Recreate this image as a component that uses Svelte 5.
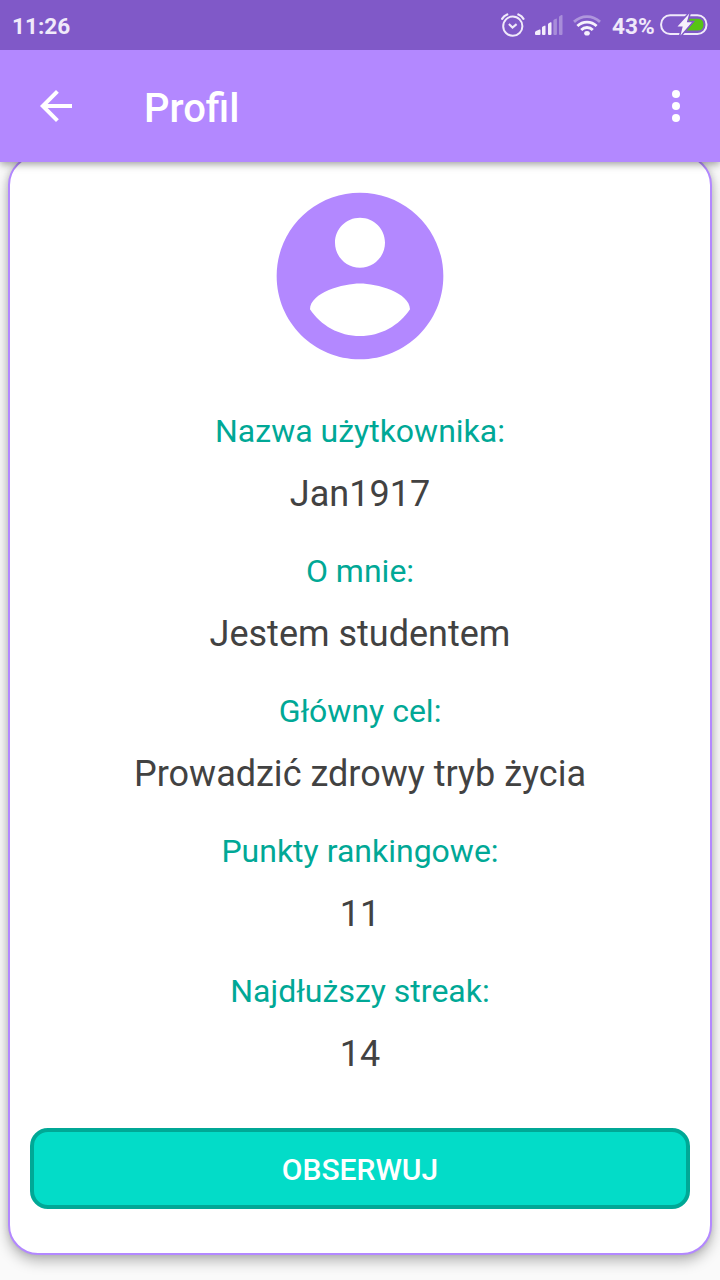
<script>
  const details = [
    { label: 'Nazwa użytkownika:', value: 'Jan1917' },
    { label: 'O mnie:', value: 'Jestem studentem' },
    { label: 'Główny cel:', value: 'Prowadzić zdrowy tryb życia' },
    { label: 'Punkty rankingowe:', value: '11' },
    { label: 'Najdłuższy streak:', value: '14' }
  ];
</script>

<div class="screen">
  <div class="status">
    <span class="time">11:26</span>
    <svg class="alarm" width="26" height="26" viewBox="0 0 26 26" fill="none" stroke="#f0eafa" stroke-width="2">
      <circle cx="12.8" cy="14.2" r="9.6" />
      <path d="M8.9 12.1l3.6 3.4 4.1-3.4" stroke-width="2.1" />
      <path d="M2.2 6.8Q3.7 3.8 7.2 2.5M18.4 2.5Q22 3.8 23.4 6.8" stroke-width="2.3" stroke-linecap="round" />
    </svg>
    <svg class="signal" width="28" height="22" viewBox="0 -.6 28 22" fill="#f3eefb">
      <path d="M0 20V17.9q0-1 1-1.5L4.5 15q1-.3 1 .6V19.4q0 .9-1 .9H1q-1 0-1-.9z" />
      <path d="M7 13.2q0-.8.8-1.2l1.7-.9q1-.4 1 .5V19.4q0 .9-1 .9H8q-1 0-1-.9z" />
      <path d="M13 9.8q0-.8.8-1.2l1.7-.9q1-.4 1 .5v11.2q0 .9-1 .9H14q-1 0-1-.9z" />
      <g opacity=".35">
        <path d="M18.4 6.2q0-.8.8-1.2l1.7-.9q1-.4 1 .5V19.4q0 .9-1 .9h-1.5q-1 0-1-.9z" />
        <path d="M24 2.6q0-.8.8-1.2l1.7-.9q1-.4 1 .5V19.4q0 .9-1 .9H25q-1 0-1-.9z" />
      </g>
    </svg>
    <svg class="wifi" width="28" height="22" viewBox="0 -.6 28 22" fill="none" stroke="#f6f2fc" stroke-width="2.8">
      <path d="M1 7.3Q6.6 2.1 14 2.1t13 5.2" opacity=".4" />
      <path d="M4.4 11.5Q8.4 7.6 14 7.6t9.6 3.9" />
      <path d="M8.2 15.4Q10.6 12.9 14 12.9t5.8 2.5" />
      <ellipse cx="14" cy="18.7" rx="2.8" ry="2.3" fill="#f6f2fc" stroke="none" />
    </svg>
    <span class="percent">43%</span>
    <svg class="battery" width="48" height="24" viewBox="0 0 48 24">
      <rect x="1.1" y="2.2" width="45.4" height="18.8" rx="9" fill="none" stroke="#f0eafa" stroke-width="2" />
      <path d="M27 5.8h10.5q6 0 6 5.9t-6 5.9H25z" fill="#57c414" />
      <path d="M29.3 .6L17.5 13.5h5.2L20.5 22.4 31.9 9.3h-5.1z" fill="#f6f2fc" stroke="#8059c8" stroke-width="3" paint-order="stroke" />
    </svg>
  </div>

  <header>
    <svg width="48" height="48" viewBox="0 0 24 24" fill="#fff" aria-hidden="true">
      <path d="M20 11H7.83l5.59-5.59L12 4l-8 8 8 8 1.41-1.41L7.83 13H20v-2z" />
    </svg>
    <h1>Profil</h1>
    <svg class="more" width="48" height="48" viewBox="0 0 24 24" fill="#fff" aria-hidden="true">
      <circle cx="12" cy="6" r="2" /><circle cx="12" cy="12" r="2" /><circle cx="12" cy="18" r="2" />
    </svg>
  </header>

  <main>
    <section class="card">
      <svg class="avatar" width="200" height="200" viewBox="0 0 24 24" fill="#b388ff" aria-hidden="true">
        <path d="M12 2C6.48 2 2 6.48 2 12s4.48 10 10 10 10-4.48 10-10S17.52 2 12 2zm0 3c1.66 0 3 1.34 3 3s-1.34 3-3 3-3-1.34-3-3 1.34-3 3-3zm0 14.2c-2.5 0-4.71-1.28-6-3.22.03-1.99 4-3.08 6-3.08 1.99 0 5.97 1.09 6 3.08-1.29 1.94-3.5 3.22-6 3.22z" />
      </svg>
      <dl>
        {#each details as item}
          <div class="detail">
            <dt>{item.label}</dt>
            <dd>{item.value}</dd>
          </div>
        {/each}
      </dl>
      <button>OBSERWUJ</button>
    </section>
  </main>
</div>

<style>
  :global(body) { margin: 0; }
  .screen {
    width: 720px;
    height: 1280px;
    display: flex;
    flex-direction: column;
    overflow: hidden;
    background: #fafafa;
    font-family: Roboto, sans-serif;
  }
  .status {
    height: 50px;
    flex: none;
    box-sizing: border-box;
    display: flex;
    align-items: center;
    padding: 0 12px;
    background: #8059c8;
    color: #f0eafa;
    font-size: 22.6px;
    font-weight: 700;
    z-index: 2;
  }
  .status span { line-height: 46px; padding-top: 4px; }
  .alarm { margin-left: auto; }
  .signal { margin-left: 9px; }
  .wifi { margin-left: 10.5px; }
  .percent { margin-left: 11px; }
  .battery { margin-left: 5.3px; }
  header {
    height: 112px;
    flex: none;
    box-sizing: border-box;
    display: flex;
    align-items: center;
    padding: 0 20px 0 32px;
    background: #b388ff;
    box-shadow: 0 2px 8px rgba(0, 0, 0, 0.4);
    z-index: 1;
  }
  h1 {
    margin: 6px 0 0 64px;
    font-size: 40px;
    line-height: 48px;
    font-weight: 500;
    color: #fff;
  }
  .more { margin-left: auto; }
  main { padding: 0 8px; }
  .card {
    box-sizing: border-box;
    height: 1100px;
    margin-top: -7px;
    padding: 19px 20px 0;
    display: flex;
    flex-direction: column;
    background: #fff;
    border: 2px solid #b388ff;
    border-radius: 30px;
    box-shadow: 0 6px 14px rgba(0, 0, 0, 0.28), 0 0 6px rgba(0, 0, 0, 0.12);
  }
  .avatar { align-self: center; flex: none; }
  dl { margin: 34px 0 0; text-align: center; }
  .detail { height: 140px; }
  dt { font-size: 32px; line-height: 42px; color: #00a896; }
  dd { margin: 18px 0 0; font-size: 36px; line-height: 48px; color: #424242; }
  button {
    height: 81px;
    margin: 18px 0 0;
    padding: 2px 0 0;
    border: 4px solid #00a896;
    border-radius: 18px;
    background: #03dcc8;
    color: #fff;
    font-family: inherit;
    font-size: 30px;
    font-weight: 500;
  }
</style>
